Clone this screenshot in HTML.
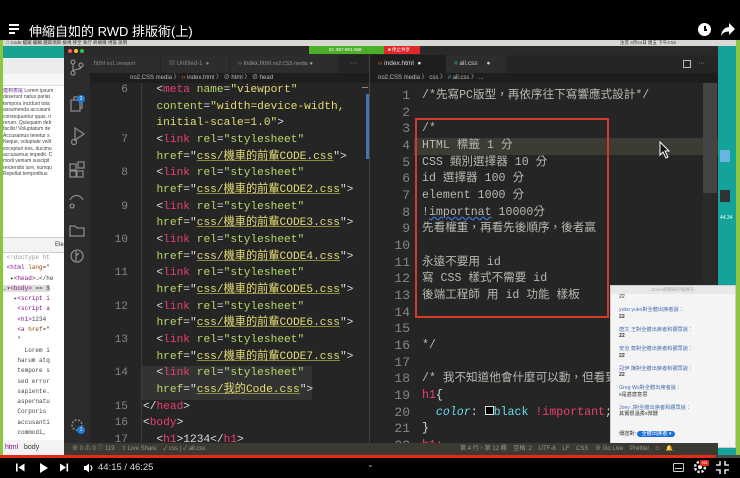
<!DOCTYPE html>
<html><head><meta charset="utf-8">
<style>
*{margin:0;padding:0;box-sizing:border-box}
body{width:740px;height:478px;overflow:hidden;background:#000;position:relative;font-family:"Liberation Sans","Noto Sans CJK TC",sans-serif}
.a{position:absolute}
.mono{font-family:"Liberation Mono","Noto Sans CJK TC",monospace;font-size:11.2px;white-space:pre;line-height:16.67px}
.t{color:#e8406c}.s{color:#e6db74;text-decoration:underline;text-decoration-color:#8a8a40}.q{color:#e6db74}.at{color:#b6d86a}.w{color:#ddd}
.ln{color:#858585;text-align:right;width:30px}
.c{color:#b8b8b0}
.brow{font-size:5px;color:#444;line-height:6.4px;white-space:nowrap;overflow:hidden}
</style></head><body>
<!-- top bar -->
<div class="a" style="left:9px;top:24px;width:11px;height:10px">
<div class="a" style="top:0;left:0;width:10px;height:1.6px;background:#fff"></div>
<div class="a" style="top:4px;left:0;width:10px;height:1.6px;background:#fff"></div>
<div class="a" style="top:8px;left:0;width:6px;height:1.6px;background:#fff"></div></div>
<div class="a" style="left:29px;top:21px;color:#fff;font-size:13px">伸縮自如的 RWD 排版術(上)</div>
<div class="a" style="left:698px;top:23px;width:13px;height:13px;border-radius:50%;background:#fff"><div class="a" style="left:6px;top:3px;width:1.5px;height:4px;background:#000"></div><div class="a" style="left:6px;top:6px;width:3px;height:1.5px;background:#000"></div></div>
<svg class="a" style="left:721px;top:23px" width="14" height="13" viewBox="0 0 14 13"><path d="M8 0L14 6 8 12V8.5C4 8.5 1.5 10 0 13 .5 8 3 4.5 8 4z" fill="#fff"/></svg>

<!-- video frame -->
<div class="a" style="left:0;top:40px;width:740px;height:418px;background:#8cc63f"></div>
<div class="a" style="left:3px;top:40px;width:733px;height:6px;background:#d8d8d4"></div>
<div class="a" style="left:6px;top:40px;font-size:4.5px;color:#333;line-height:6px;white-space:nowrap">&#63743; Code 檔案 編輯 選取項目 檢視 移至 執行 終端機 視窗 說明</div>
<div class="a" style="left:620px;top:40px;font-size:4.5px;color:#333;line-height:6px;white-space:nowrap">注音 4月24日 週五 下午4:52</div>
<div class="a" style="left:718px;top:46px;width:18px;height:410px;background:#14a39a"></div>
<div class="a" style="left:720px;top:150px;width:10px;height:12px;background:#6ab4e0"></div>
<div class="a" style="left:720px;top:190px;width:10px;height:12px;background:#333"></div>
<div class="a" style="left:720px;top:215px;font-size:5px;color:#fff">44.34</div>

<!-- browser -->
<div class="a" style="left:3px;top:46px;width:63px;height:410px;background:#fff"></div>
<div class="a" style="left:3px;top:46px;width:63px;height:12px;background:#16a392"></div>
<div class="a" style="left:3px;top:58px;width:63px;height:16px;background:#ececec"></div>
<div class="a" style="left:3px;top:74px;width:63px;height:12px;background:#f6f6f6;border-bottom:1px solid #ddd"></div>
<div class="a brow" style="left:3px;top:88px;width:61px;height:126px">
<span style="color:#639">連到表尾</span> Lorem ipsum<br>deserunt natus pariat<br>tempora incidunt tota<br>assumenda accusant<br>consequuntur quas, n<br>rerum. Quisquam deb<br>facilis! Voluptatum de<br>Accusamus tenetur s<br>Neque, voluptate velit<br>excepturi eos, ducimu<br>accusamus impedit. C<br>modi veniam suscipit<br>reiciendis iure, numqu<br>Repellat temporibus</div>
<div class="a" style="left:3px;top:237px;width:63px;height:16px;background:#f3f3f3;border-top:1px solid #ccc;border-bottom:1px solid #ccc;font-size:6px;color:#333;padding:4px 0 0 52px">Ele</div>
<div class="a" style="left:3px;top:253px;width:63px;height:187px;font-family:'Liberation Mono',monospace;font-size:6px;line-height:10.3px;white-space:pre;color:#444;overflow:hidden"> <span style="color:#999">&lt;!doctype ht</span>
 <span style="color:#881280">&lt;html</span> <span style="color:#994500">lang</span>="
  ▸<span style="color:#881280">&lt;head&gt;</span>…&lt;/he
<span style="background:#ddd">…▾<span style="color:#881280">&lt;body&gt;</span> == $</span>
   ▸<span style="color:#881280">&lt;script i</span>
    <span style="color:#881280">&lt;script a</span>
    <span style="color:#881280">&lt;h1&gt;</span>1234
    <span style="color:#881280">&lt;a</span> <span style="color:#994500">href</span>="
    "
      Lorem i
    harum atq
    tempore s
    sed error
    sapiente.
    aspernatu
    Corporis
    accusanti
    commodi,</div>
<div class="a" style="left:3px;top:440px;width:63px;height:15px;background:#f3f3f3;font-size:7px;line-height:15px;color:#333">&nbsp;<span style="color:#881280">html</span>&nbsp;&nbsp; body</div>

<!-- vscode -->
<div class="a" style="left:64px;top:46px;width:654px;height:410px;background:#1e1e1e"></div>
<div class="a" style="left:64px;top:46px;width:654px;height:9px;background:#2a2a2a"></div>
<div class="a" style="left:68px;top:49px;width:4px;height:4px;border-radius:50%;background:#fc5f57"></div>
<div class="a" style="left:74px;top:49px;width:4px;height:4px;border-radius:50%;background:#fdbc2e"></div>
<div class="a" style="left:80px;top:49px;width:4px;height:4px;border-radius:50%;background:#28c840"></div>
<div class="a" style="left:309px;top:46px;width:75px;height:8px;background:#4caf28;font-size:4.5px;color:#fff;padding:1px 0 0 20px">ID: 957-901-568</div>
<div class="a" style="left:384px;top:46px;width:36px;height:8px;background:#e0282c;font-size:4.5px;color:#fff;padding:1px 0 0 4px">■ 停止共享</div>
<!-- activity bar -->
<div class="a" style="left:64px;top:55px;width:26px;height:388px;background:#2c2c2c"></div>
<svg class="a" style="left:68px;top:58px" width="18" height="220" viewBox="0 0 18 220" fill="none" stroke="#8a8a8a" stroke-width="1.3">
<circle cx="5" cy="4" r="2"/><circle cx="5" cy="15" r="2"/><circle cx="13" cy="7" r="2"/><path d="M5 6v7M13 9c0 3-8 2-8 4"/>
<rect x="3" y="42" width="9" height="11"/><path d="M6 42v-3h8v11h-2"/>
<path d="M7 70l9 6-9 6z"/><circle cx="6" cy="84" r="2.5"/>
<rect x="2" y="106" width="6" height="6"/><rect x="2" y="113" width="6" height="6"/><rect x="9" y="113" width="6" height="6"/><rect x="10" y="104" width="6" height="6"/>
<path d="M2 142c3-6 10-6 13 0M4 146a2 2 0 1 0 .1 0"/>
<path d="M2 168h5l2 2h7v8H2z"/>
<circle cx="9" cy="198" r="6"/><path d="M8 193v10M8 198l3-3"/>
</svg>
<div class="a" style="left:77px;top:95px;width:8px;height:8px;border-radius:50%;background:#1f7ad9;font-size:5px;color:#fff;text-align:center;line-height:8px">3</div>
<svg class="a" style="left:69px;top:417px" width="16" height="16" viewBox="0 0 16 16"><circle cx="8" cy="8" r="5" fill="none" stroke="#8a8a8a" stroke-width="1.5" stroke-dasharray="2 1.5"/></svg>
<div class="a" style="left:77px;top:426px;width:8px;height:8px;border-radius:50%;background:#1f7ad9;font-size:5px;color:#fff;text-align:center;line-height:8px">1</div>

<!-- tabs -->
<div class="a" style="left:90px;top:55px;width:628px;height:18px;background:#252526"></div>
<div class="a" style="left:90px;top:55px;width:70px;height:18px;background:#2d2d2d;font-size:6px;color:#888;line-height:18px;padding-left:2px">.html <span style="font-size:5px">no1.viewport</span></div>
<div class="a" style="left:161px;top:55px;width:68px;height:18px;background:#2d2d2d;font-size:6px;color:#888;line-height:18px;padding-left:8px">▤ Untitled-1 &nbsp;●</div>
<div class="a" style="left:230px;top:55px;width:108px;height:18px;background:#2d2d2d;font-size:6px;color:#999;line-height:18px;padding-left:8px"><span style="color:#e37933">‹›</span> index.html <span style="font-size:5px">no2.CSS media</span> ●</div>
<div class="a" style="left:350px;top:55px;font-size:7px;color:#999;line-height:18px">···</div>
<div class="a" style="left:370px;top:55px;width:76px;height:18px;background:#1e1e1e;font-size:6.5px;color:#ddd;line-height:18px;padding-left:8px"><span style="color:#e37933">‹›</span> index.html &nbsp;●</div>
<div class="a" style="left:446px;top:55px;width:60px;height:18px;background:#2d2d2d;font-size:6.5px;color:#ccc;line-height:18px;padding-left:8px"><span style="color:#519aba">#</span> all.css &nbsp;&nbsp;&nbsp;&nbsp;●</div>
<div class="a" style="left:683px;top:60px;width:8px;height:8px;border:1px solid #bbb"></div>
<div class="a" style="left:698px;top:55px;font-size:7px;color:#bbb;line-height:18px">···</div>
<!-- breadcrumbs -->
<div class="a" style="left:130px;top:73px;font-size:6px;color:#bbb;line-height:10px;white-space:nowrap">no2.CSS media 〉 <span style="color:#e37933">‹›</span> index.html 〉 ⊘ html 〉 ⊘ head</div>
<div class="a" style="left:378px;top:73px;font-size:6px;color:#bbb;line-height:10px;white-space:nowrap">no2.CSS media 〉 css 〉 <span style="color:#519aba">#</span> all.css 〉 ...</div>
<div class="a" style="left:369px;top:55px;width:1px;height:388px;background:#444"></div>

<!-- left editor -->
<div class="a" style="left:90px;top:83px;width:279px;height:360px;overflow:hidden;background:#252525">
<div class="a" style="left:51px;top:0;width:1px;height:360px;background:#3a3a3a"></div>
<div class="a" style="left:52px;top:283px;width:170px;height:34px;background:#333"></div>
<div class="a mono ln" style="left:8px;top:-1px">6


7

8

9

10

11

12

13

14

15
16
17</div>
<div class="a mono w" style="left:53px;top:-1px"><span class="w">  &lt;</span><span class="t">meta</span> <span class="at">name</span>=<span class="q">"viewport"</span>
  <span class="at">content</span>=<span class="q">"width=device-width,</span>
<span class="q">  initial-scale=1.0"</span>&gt;
  &lt;<span class="t">link</span> <span class="at">rel</span>=<span class="at">"stylesheet"</span>
  <span class="at">href</span>="<span class="s">css/機車的前輩CODE.css</span>"&gt;
  &lt;<span class="t">link</span> <span class="at">rel</span>=<span class="at">"stylesheet"</span>
  <span class="at">href</span>="<span class="s">css/機車的前輩CODE2.css</span>"&gt;
  &lt;<span class="t">link</span> <span class="at">rel</span>=<span class="at">"stylesheet"</span>
  <span class="at">href</span>="<span class="s">css/機車的前輩CODE3.css</span>"&gt;
  &lt;<span class="t">link</span> <span class="at">rel</span>=<span class="at">"stylesheet"</span>
  <span class="at">href</span>="<span class="s">css/機車的前輩CODE4.css</span>"&gt;
  &lt;<span class="t">link</span> <span class="at">rel</span>=<span class="at">"stylesheet"</span>
  <span class="at">href</span>="<span class="s">css/機車的前輩CODE5.css</span>"&gt;
  &lt;<span class="t">link</span> <span class="at">rel</span>=<span class="at">"stylesheet"</span>
  <span class="at">href</span>="<span class="s">css/機車的前輩CODE6.css</span>"&gt;
  &lt;<span class="t">link</span> <span class="at">rel</span>=<span class="at">"stylesheet"</span>
  <span class="at">href</span>="<span class="s">css/機車的前輩CODE7.css</span>"&gt;
  &lt;<span class="t">link</span> <span class="at">rel</span>=<span class="at">"stylesheet"</span>
  <span class="at">href</span>="<span class="s">css/我的Code.css</span>"&gt;
&lt;/<span class="t">head</span>&gt;
&lt;<span class="t">body</span>&gt;
  &lt;<span class="t">h1</span>&gt;1234&lt;/<span class="t">h1</span>&gt;</div>
<div class="a" style="left:272px;top:4px;width:6px;height:1px;background:#888"></div>
<div class="a" style="left:276px;top:11px;width:3px;height:65px;background:#4a8ad8;opacity:.8"></div>
</div>

<!-- right editor -->
<div class="a" style="left:370px;top:83px;width:348px;height:360px;overflow:hidden;background:#252525">
<div class="a" style="left:44px;top:55px;width:304px;height:17px;background:#3c3c34"></div>
<div class="a mono ln" style="left:8px;top:5px;width:32px;font-size:13px">1
2
3
4
5
6
7
8
9
10
11
12
13
14
15
16
17
18
19
20
21
22</div>
<div class="a mono c" style="left:52px;top:5px;font-size:11.6px">/*先寫PC版型，再依序往下寫響應式設計*/

/*
HTML 標籤 1 分
CSS 類別選擇器 10 分
id 選擇器 100 分
element 1000 分
!<span style="text-decoration:underline wavy #3a7ad8">importnat</span> 10000分
先看權重，再看先後順序，後者贏

永遠不要用 id
寫 CSS 樣式不需要 id
後端工程師 用 id 功能 樣板


*/

/* 我不知道他會什麼可以動，但看到了
<span class="t">h1</span><span class="w">{</span>
  <span style="color:#66d9ef;font-style:italic">color</span><span class="w">: </span><span style="display:inline-block;width:9px;height:9px;border:1px solid #ddd;background:#000"></span><span style="color:#66d9ef">black</span> <span class="t">!important</span><span class="w">;</span>
<span class="w">}</span>
<span class="t">h1:</span></div>
<div class="a" style="left:45px;top:35px;width:194px;height:200px;border:2px solid #d33a28"></div>
<div class="a" style="left:333px;top:0;width:14px;height:360px;background:#2a2a2a"></div>
<div class="a" style="left:333px;top:0;width:14px;height:110px;background:#444"></div>
</div>
<svg class="a" style="left:659px;top:141px" width="12" height="18" viewBox="0 0 12 18"><path d="M1 1v13l3-3 3 6 2-1-3-6h4z" fill="#111" stroke="#fff" stroke-width="1"/></svg>

<!-- chat panel -->
<div class="a" style="left:610px;top:285px;width:126px;height:163px;background:#f4f4f4;border:1px solid #ccc;font-size:5.2px;line-height:6.5px;color:#333">
<div style="height:8px;background:#e8e8e8;color:#aaa;text-align:center;font-size:4.5px;line-height:8px">Zoom網路研討會聊天</div>
<div style="padding:0 0 0 8px">22<br><br><span style="color:#4a6fb5">yuko yuko對全體出席者說：</span><br><b>22</b><br><br><span style="color:#4a6fb5">唐文 王對全體出席者和觀眾說：</span><br><b>22</b><br><br><span style="color:#4a6fb5">安治 蔡對全體出席者和觀眾說：</span><br><b>22</b><br><br><span style="color:#4a6fb5">冠伊 陳對全體出席者和觀眾說：</span><br><b>22</b><br><br><span style="color:#4a6fb5">Greg Wu對全體出席者說：</span><br>x是甚麼意思<br><br><span style="color:#4a6fb5">Joey J對全體出席者和觀眾說：</span><br>其實很溫柔x微醺<br><br><br>傳送對: <span style="background:#1a6fd8;color:#fff;border-radius:4px;padding:0 4px">全體出席者 ▾</span><br><br>欄</div></div>

<!-- status bar -->
<div class="a" style="left:64px;top:443px;width:654px;height:12px;background:#3a3a30;font-size:6px;color:#999;line-height:12px;white-space:nowrap"><span style="padding-left:8px">⊗ 0 ⚠ 0 ⓘ 119 &nbsp;&nbsp; ⇪ Live Share &nbsp;&nbsp; ✓ css | ✓ all.css</span><span class="a" style="left:396px">第 4 行，第 12 欄 &nbsp;&nbsp; 空格: 2 &nbsp;&nbsp; UTF-8 &nbsp;&nbsp; LF &nbsp;&nbsp; CSS &nbsp;&nbsp; ⊕ Go Live &nbsp;&nbsp; Prettier &nbsp; ☺ &nbsp; 🔔</span></div>
<div class="a" style="left:0;top:455px;width:740px;height:3px;background:#4a4a4a"></div>
<div class="a" style="left:0;top:455px;width:715px;height:3px;background:#e52a1c"></div>

<!-- controls -->
<svg class="a" style="left:14px;top:461px" width="80" height="14" viewBox="0 0 80 14" fill="#fff">
<rect x="2" y="2.5" width="1.6" height="8"/><path d="M10.5 2.5v8L4.5 6.5z"/>
<path d="M26 2v10l8-5z"/>
<path d="M46 2.5v8l6-4z"/><rect x="52.5" y="2.5" width="1.6" height="8"/>
<path d="M70 5h2l3-2.5v9l-3-2.5h-2z"/><path d="M76.5 4.5a3 3 0 0 1 0 5" stroke="#fff" fill="none" stroke-width="1.1"/>
</svg>
<div class="a" style="left:98px;top:461px;color:#ddd;font-size:9.5px;line-height:14px">44:15 / 46:25</div>
<div class="a" style="left:367px;top:460px;color:#aaa;font-size:8px">⌄</div>
<div class="a" style="left:673px;top:463px;width:11px;height:9px;border:1.3px solid #ccc;border-radius:1px"><div class="a" style="left:1px;top:4px;width:7px;height:1px;background:#ccc"></div></div>
<svg class="a" style="left:693px;top:460px" width="14" height="14" viewBox="0 0 14 14"><circle cx="7" cy="7" r="5" fill="none" stroke="#ddd" stroke-width="2.5" stroke-dasharray="2.5 1.5"/><circle cx="7" cy="7" r="2" fill="#fff"/></svg>
<div class="a" style="left:700px;top:460px;width:9px;height:6px;background:#e52a1c;border-radius:1px;font-size:4px;color:#fff;text-align:center;line-height:6px">HD</div>
<svg class="a" style="left:716px;top:461px" width="13" height="13" viewBox="0 0 13 13" fill="none" stroke="#ddd" stroke-width="1.6"><path d="M4 0v4H0M9 0v4h4M4 13V9H0M9 13V9h4"/></svg>
</body></html>
